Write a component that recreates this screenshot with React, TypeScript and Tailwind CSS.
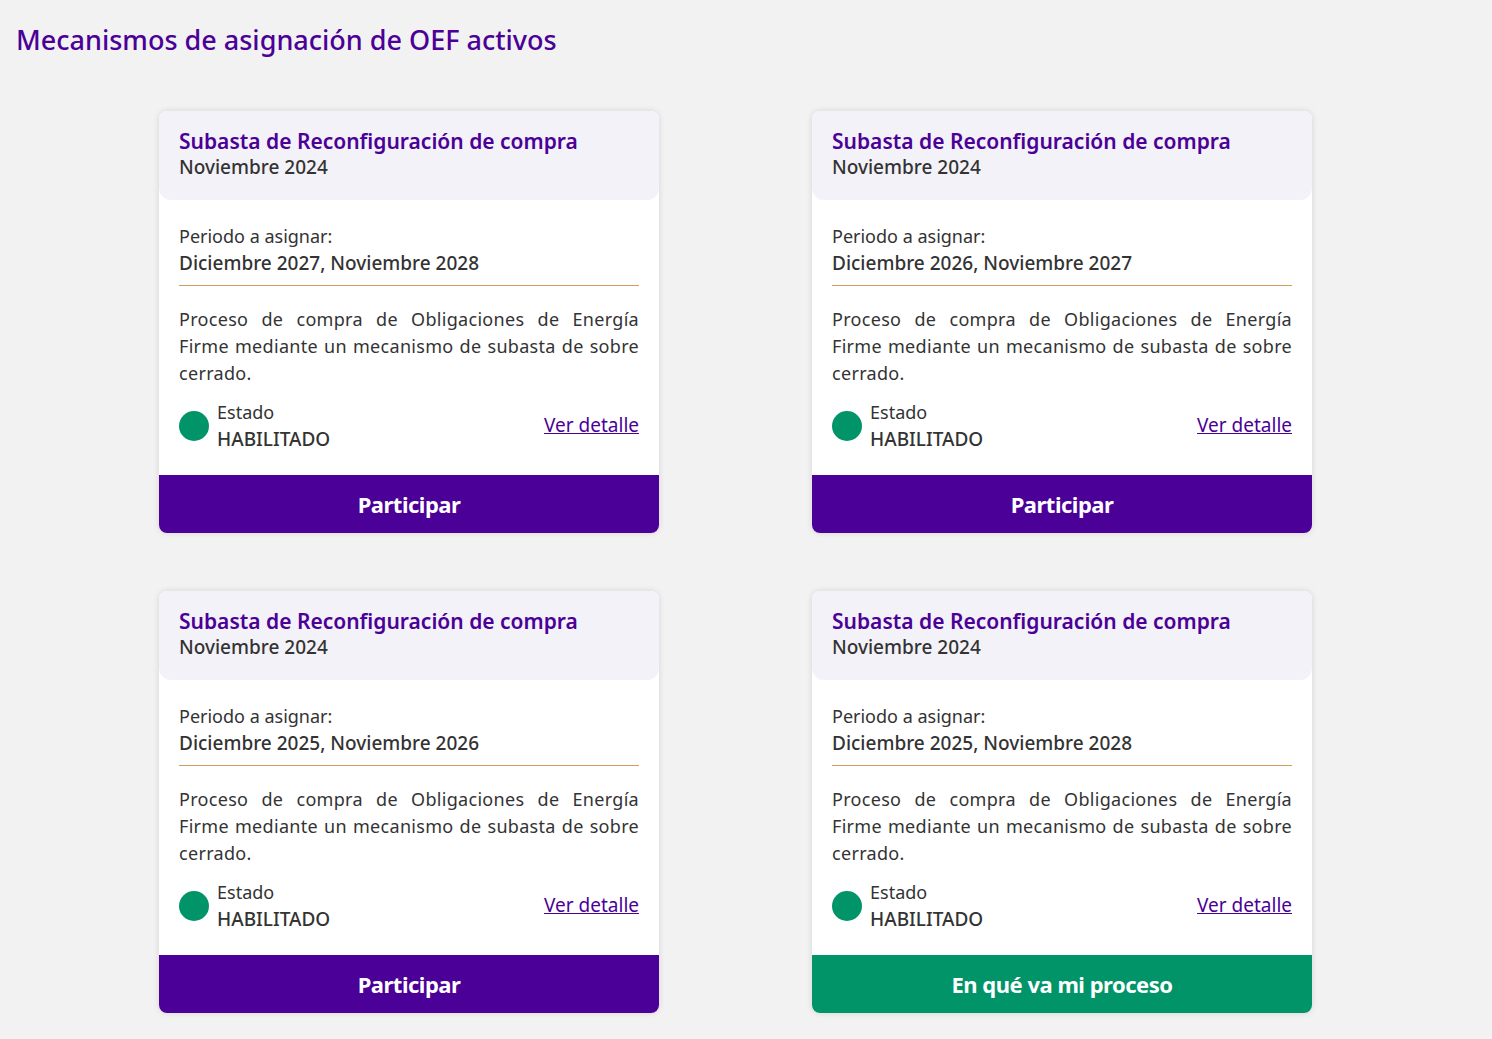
import React from "react";

const cards = [
  { period: "Diciembre 2027, Noviembre 2028", btn: "Participar", green: false },
  { period: "Diciembre 2026, Noviembre 2027", btn: "Participar", green: false },
  { period: "Diciembre 2025, Noviembre 2026", btn: "Participar", green: false },
  { period: "Diciembre 2025, Noviembre 2028", btn: "En qué va mi proceso", green: true },
];

function Card({ period, btn, green }: { period: string; btn: string; green: boolean }) {
  return (
    <div className="w-[500px] h-[422px] bg-white rounded-[8px] shadow-[0_0_6px_rgba(0,0,0,0.12)] flex flex-col overflow-hidden">
      <div className="h-[89px] bg-[#f3f2f8] rounded-b-[12px] px-[20px] pt-[17px]">
        <div className="text-[21px] leading-[27px] font-semibold text-[#4b0097]">Subasta de Reconfiguración de compra</div>
        <div className="text-[19px] leading-[25px] font-medium text-[#333]">Noviembre 2024</div>
      </div>
      <div className="px-[20px] pt-[23px] flex-1 flex flex-col text-[#333]">
        <div className="text-[18px] leading-[27px]">Periodo a asignar:</div>
        <div className="text-[19px] leading-[26px] font-medium pb-[9px] border-b border-b-[#d59a5b]">{period}</div>
        <p className="text-[18px] leading-[27px] text-justify mt-[20px] tracking-[0.3px]">
          Proceso de compra de Obligaciones de Energía Firme mediante un mecanismo de subasta de sobre cerrado.
        </p>
        <div className="flex items-center mt-[12px]">
          <div className="w-[30px] h-[30px] rounded-full bg-[#009468]" />
          <div className="ml-[8px] flex-1">
            <div className="text-[18px] leading-[27px]">Estado</div>
            <div className="text-[19px] leading-[26px] font-medium">HABILITADO</div>
          </div>
          <a className="text-[19px] text-[#4b0097] underline">Ver detalle</a>
        </div>
      </div>
      <div className={`h-[58px] flex items-center justify-center text-white text-[22px] font-bold tracking-[-0.5px] ${green ? "bg-[#009468]" : "bg-[#4b0097]"}`}>
        {btn}
      </div>
    </div>
  );
}

export default function App() {
  return (
    <div className="min-h-[1039px] bg-[#f2f2f2] font-['Noto_Sans',sans-serif]">
      <h1 className="pl-[16px] pt-[20px] text-[27px] leading-[40px] font-medium text-[#4b0097]">
        Mecanismos de asignación de OEF activos
      </h1>
      <div className="grid grid-cols-[500px_500px] gap-x-[153px] gap-y-[58px] pl-[159px] pt-[51px]">
        {cards.map((c, i) => (
          <Card key={i} {...c} />
        ))}
      </div>
    </div>
  );
}
